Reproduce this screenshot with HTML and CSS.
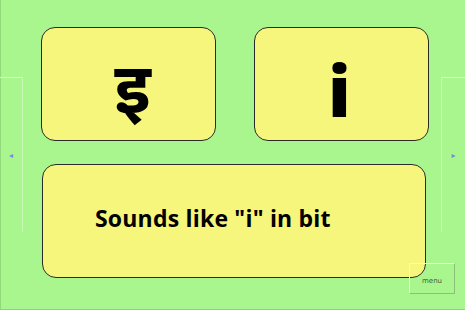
FILE: index.html
```html
<!DOCTYPE html>
<html lang="en">
<head>
<title>Letter card</title>
<link rel="stylesheet" href="styles.css">
</head>
<body>
<div class="screen">
    <div class="nav nav-left"><span class="arrow">&#9666;</span></div>

    <div class="stage">
        <div class="top-row">
            <div class="card letter">इ</div>
            <div class="card letter latin">i</div>
        </div>
        <div class="card sound">Sounds like "i" in bit</div>
    </div>

    <div class="nav nav-right"><span class="arrow">&#9656;</span></div>

    <button class="menu-btn" type="button">menu</button>
</div>
</body>
</html>
```

FILE: styles.css
```css
body {
    margin: 0;
    background-color: #aaf68e;
    font-family: "DejaVu Sans", "Noto Sans", sans-serif;
}

.screen {
    position: relative;
    display: flex;
    align-items: center;
    height: 309px;
    border-bottom: 1px solid #8ed477;
    box-shadow: inset 1px 0 0 #92d97b;
}

.nav {
    height: 154px;
    display: flex;
    align-items: center;
    border-top: 1px solid #d8fbcc;
}

.nav-left {
    width: 22px;
    border-right: 1px solid #c6f8b4;
    justify-content: center;
}

.nav-right {
    width: 23px;
    border-left: 1px solid #c6f8b4;
    justify-content: center;
}

.arrow {
    color: #7b86e8;
    font-size: 8px;
}

.stage {
    flex: 1;
    align-self: flex-start;
    padding: 27px 0 0 18px;
}

.top-row {
    display: flex;
    gap: 38px;
}

.card {
    background-color: #f6f67c;
    border: 1px solid #2a2a2a;
    border-radius: 14px;
    box-sizing: border-box;
}

.letter {
    width: 175px;
    height: 114px;
    display: flex;
    align-items: center;
    justify-content: center;
    font-size: 70px;
    font-weight: bold;
    color: #000;
    padding: 4px 0 0 8px;
}

.latin {
    font-family: "Open Sans", sans-serif;
    font-weight: 800;
    font-size: 70px;
    padding: 12px 4px 0 0;
}

.sound {
    width: 384px;
    height: 114px;
    margin: 23px 0 0 1px;
    display: flex;
    align-items: center;
    padding: 0 0 6px 52px;
    font-family: "Open Sans", sans-serif;
    font-size: 23px;
    font-weight: 700;
    letter-spacing: 0.2px;
}

.menu-btn {
    position: absolute;
    left: 409px;
    top: 263px;
    width: 46px;
    height: 31px;
    background: transparent;
    border: 1px solid;
    border-color: #e8fde0 #8cc07a #8cc07a #e8fde0;
    font-family: "DejaVu Sans", sans-serif;
    font-size: 7px;
    color: #3f5f3a;
    padding: 4px 0 0;
}
```
